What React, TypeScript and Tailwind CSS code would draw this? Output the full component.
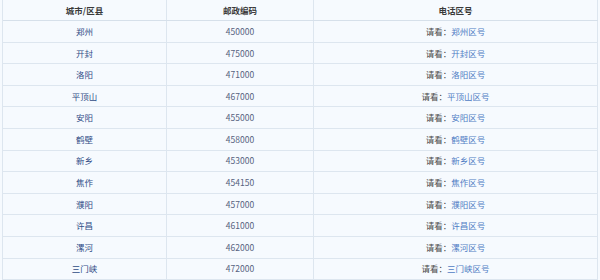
import React from 'react';

interface Row {
  city: string;
  code: string;
}

const rows: Row[] = [
  { city: '郑州', code: '450000' },
  { city: '开封', code: '475000' },
  { city: '洛阳', code: '471000' },
  { city: '平顶山', code: '467000' },
  { city: '安阳', code: '455000' },
  { city: '鹤壁', code: '458000' },
  { city: '新乡', code: '453000' },
  { city: '焦作', code: '454150' },
  { city: '濮阳', code: '457000' },
  { city: '许昌', code: '461000' },
  { city: '漯河', code: '462000' },
  { city: '三门峡', code: '472000' },
];

export default function App() {
  return (
    <div
      className="w-[600px] h-[280px] overflow-hidden bg-[#f6fafe] px-[2px] text-[8.5px]"
      style={{ fontFamily: '"Noto Sans CJK SC", "Liberation Sans", sans-serif' }}
    >
      <div className="border-l border-[#dde6ef]">
        {/* header */}
        <div className="grid grid-cols-[164px_147px_1fr] h-[21px] border-b border-[#d6e0ea] text-[#3a3a3a] font-semibold">
          <div className="flex items-center justify-center border-r border-[#dde6ef]">城市/区县</div>
          <div className="flex items-center justify-center border-r border-[#dde6ef]">邮政编码</div>
          <div className="flex items-center justify-center border-r border-[#dde6ef]">电话区号</div>
        </div>

        {rows.map(r => (
          <div
            key={r.city}
            className="grid grid-cols-[164px_147px_1fr] h-[21.6px] border-b border-[#dde6ef]"
          >
            <div className="flex items-center justify-center border-r border-[#dde6ef] text-[#2f4c86]">
              {r.city}
            </div>
            <div className="flex items-center justify-center border-r border-[#dde6ef] text-[#56627e]">
              {r.code}
            </div>
            <div className="flex items-center justify-center border-r border-[#dde6ef] text-[#4a4a4a]">
              请看：<span className="text-[#4f7cc4]">{r.city}区号</span>
            </div>
          </div>
        ))}
      </div>
    </div>
  );
}
